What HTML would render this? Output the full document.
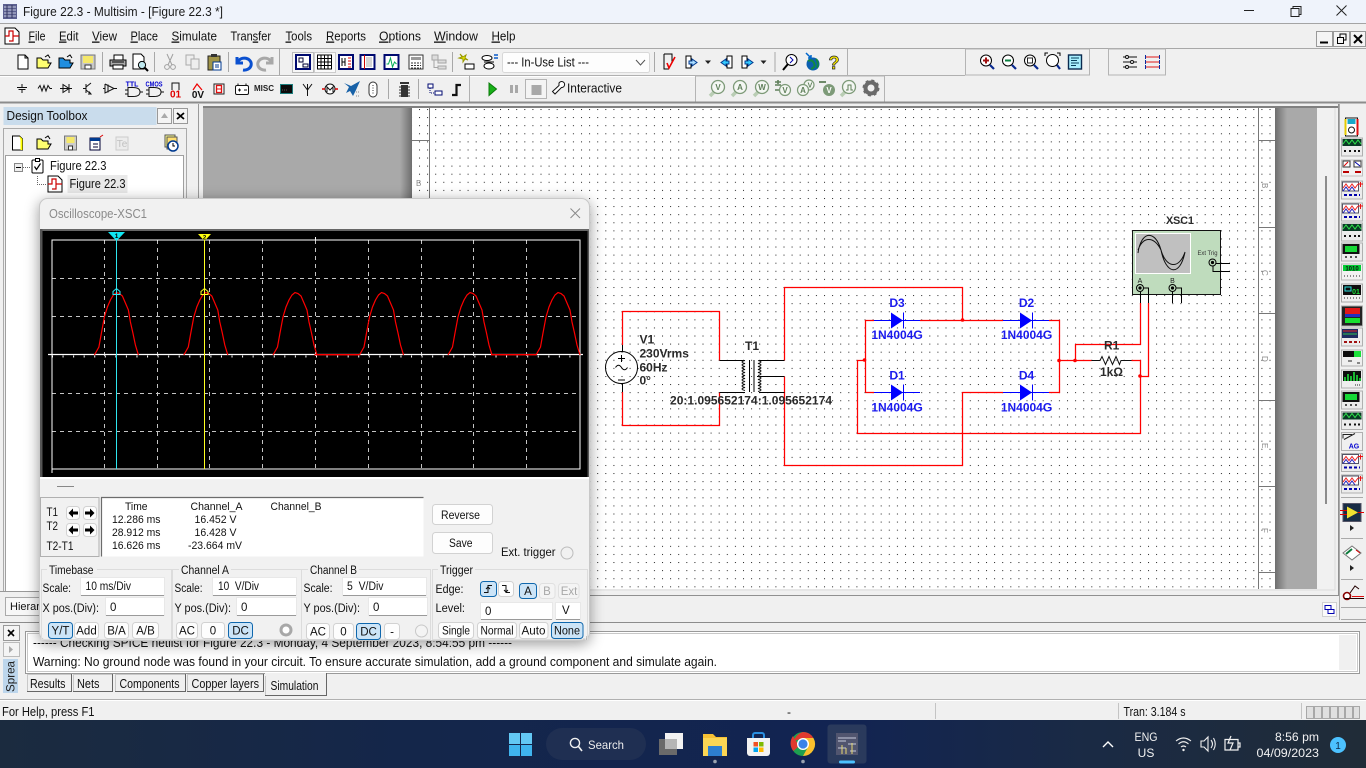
<!DOCTYPE html>
<html><head><meta charset="utf-8"><title>Figure 22.3 - Multisim</title>
<style>
html,body{margin:0;padding:0;width:1366px;height:768px;overflow:hidden;background:#f0f0f0}
svg{display:block;font-family:"Liberation Sans",sans-serif;font-size:12px}
text{fill:#111;white-space:pre}
.m{text-anchor:middle}
.b{fill:#fdfdfd;stroke:#d2d2d2}
.s{fill:#cce4f7;stroke:#0f67ad}
.i{fill:#fff;stroke:#e8e8e8}
.d{fill:#f4f4f4;stroke:#e0e0e0}
.g{fill:#9a9a9a}
.sb{font-weight:bold;fill:#2a2a2a}
.bl{font-weight:bold;fill:#1a1aee}
.l{fill:none;stroke:#000;stroke-width:1}
.r{fill:none;stroke:#f00;stroke-width:1.25}
.k{fill:none;stroke:#111;stroke-width:1}
.sep{stroke:#a8a8a8;stroke-width:1}
.lt{fill:#fff}
</style></head><body>
<svg width="1366" height="768" viewBox="0 0 1366 768" xmlns="http://www.w3.org/2000/svg">
<defs>
<pattern id="dots" x="419" y="109" width="8.1" height="8.09" patternUnits="userSpaceOnUse"><rect width="1" height="1" fill="#222"/></pattern>
<linearGradient id="tb" x1="0" x2="1" y1="0" y2="0"><stop offset="0" stop-color="#1b2b3f"/><stop offset=".3" stop-color="#14264a"/><stop offset=".62" stop-color="#122452"/><stop offset=".8" stop-color="#1a2a44"/><stop offset="1" stop-color="#202c38"/></linearGradient>
<linearGradient id="sh1" x1="0" x2="1" y1="0" y2="0"><stop offset="0" stop-color="#a9a9a9"/><stop offset="1" stop-color="#6e6e6e"/></linearGradient>
<linearGradient id="sh2" x1="0" x2="1" y1="0" y2="0"><stop offset="0" stop-color="#6e6e6e"/><stop offset="1" stop-color="#a9a9a9"/></linearGradient>
<polyline id="hump" fill="none" stroke="#f00" stroke-width="1.2" points="0,0 4.5,-8 7,-22 10,-38 13,-48 16,-55 19,-60 22,-62.5 25,-61.5 28,-59 31,-52 34,-45 36,-33 38.5,-22 41,-10 44,0"/>
<g id="diode"><path d="M-23,0H23" stroke="#00f" fill="none"/><path d="M-6,-8L6,0L-6,8Z" fill="#00f"/><path d="M6.5,-8V8" stroke="#00f" fill="none"/></g>
<g id="term"><circle r="3.5" fill="none" stroke="#000"/><circle r="1.6" fill="#000"/></g>
<g id="folder"><path d="M-7,6V-4H-3L-1,-2H4V1H7L4,6Z" stroke="#000" stroke-width="1"/><path d="M1,-5L4,-7L6,-4" fill="none" stroke="#000"/></g>
<g id="meas"><path d="M-8,8L-3,3" stroke="#b9cdb4" stroke-width="3.5" fill="none"/><circle cy="-1" r="6.5" fill="#f4f7f3" stroke="#7d9a78" stroke-width="1.3"/></g>
<g id="ig"><rect x="-10.5" y="-9" width="21" height="18" fill="#ececec" stroke="#b0b0b0"/><rect x="-9.5" y="-8" width="19" height="7" fill="#0a3a25"/><path d="M-9,-3L-6,-7L-3,-3L0,-7L3,-3L6,-7L9,-3" fill="none" stroke="#2ee04a"/><path d="M-8,4H-6M-3,4H-1M2,4H4M6,4H8" stroke="#111" stroke-width="2"/></g>
<g id="ib"><rect x="-10.5" y="-9" width="21" height="18" fill="#ececec" stroke="#b0b0b0"/><rect x="-9.5" y="-8" width="16" height="9" fill="#fff" stroke="#556"/><path d="M-9,-2L-6,-6L-3,-2L0,-6L3,-2L6,-6" fill="none" stroke="#e22"/><path d="M-9,1L-6,-3L-3,1L0,-3L3,1" fill="none" stroke="#22b"/><path d="M8.5,-8V-3M6,-6H11" stroke="#e11"/><path d="M-8,5H8" stroke="#00a" stroke-width="2" stroke-dasharray="3 2"/></g>
<g id="ik"><rect x="-10.5" y="-9" width="21" height="18" fill="#ececec" stroke="#b0b0b0"/><rect x="-9.5" y="-8" width="17" height="10" fill="#111"/><rect x="-7" y="-6" width="12" height="6" fill="#16d936"/><path d="M-7,5H-5M-2,5H0M3,5H5" stroke="#222" stroke-width="1.5"/></g>
</defs>

<!-- base -->
<rect width="1366" height="768" fill="#f0f0f0"/>
<!-- title bar -->
<rect width="1366" height="23" fill="#eff3fb"/>
<rect y="23" width="1366" height="1" fill="#a4a4a4"/>
<g transform="translate(3,4)"><rect width="14" height="15" fill="#5b5f8f"/><path d="M1,3H13M1,6H13M1,9H13M1,12H13" stroke="#c9cce0"/><path d="M4,1V14M9,1V14" stroke="#33355e"/></g>
<text x="23" y="16" font-size="13" textLength="200" lengthAdjust="spacingAndGlyphs" style="fill:#1a1a1a">Figure 22.3 - Multisim - [Figure 22.3 *]</text>
<path d="M1244,10.5H1254" stroke="#222"/>
<path d="M1291,8.5h8v8h-8zM1293,8.5v-2h8v8h-2" fill="none" stroke="#222"/>
<path d="M1336.5,5.5L1346.5,15.5M1346.5,5.5L1336.5,15.5" stroke="#222"/>

<!-- menu -->
<g transform="translate(12,36)"><path d="M-7,-8H3L7,-4V8H-7Z" fill="#fff" stroke="#000"/><path d="M-7,0H-3V-5H1V5H-3M1,0H7" fill="none" stroke="#c00" stroke-width="1.2"/></g>
<g font-size="13">
<text x="28.5" y="40.5" textLength="17" lengthAdjust="spacingAndGlyphs"><tspan text-decoration="underline">F</tspan>ile</text>
<text x="59" y="40.5" textLength="19.5" lengthAdjust="spacingAndGlyphs"><tspan text-decoration="underline">E</tspan>dit</text>
<text x="92" y="40.5" textLength="25" lengthAdjust="spacingAndGlyphs"><tspan text-decoration="underline">V</tspan>iew</text>
<text x="130.5" y="40.5" textLength="27.5" lengthAdjust="spacingAndGlyphs"><tspan text-decoration="underline">P</tspan>lace</text>
<text x="171.5" y="40.5" textLength="45.5" lengthAdjust="spacingAndGlyphs"><tspan text-decoration="underline">S</tspan>imulate</text>
<text x="230.5" y="40.5" textLength="40.5" lengthAdjust="spacingAndGlyphs">Tran<tspan text-decoration="underline">s</tspan>fer</text>
<text x="285.5" y="40.5" textLength="26.5" lengthAdjust="spacingAndGlyphs"><tspan text-decoration="underline">T</tspan>ools</text>
<text x="326" y="40.5" textLength="40" lengthAdjust="spacingAndGlyphs"><tspan text-decoration="underline">R</tspan>eports</text>
<text x="379" y="40.5" textLength="42" lengthAdjust="spacingAndGlyphs"><tspan text-decoration="underline">O</tspan>ptions</text>
<text x="434" y="40.5" textLength="44" lengthAdjust="spacingAndGlyphs"><tspan text-decoration="underline">W</tspan>indow</text>
<text x="491.5" y="40.5" textLength="24" lengthAdjust="spacingAndGlyphs"><tspan text-decoration="underline">H</tspan>elp</text>
</g>
<g><rect x="1316.5" y="31.5" width="16" height="15" fill="#f4f4f4" stroke="#999"/><path d="M1320,42.5H1328" stroke="#000" stroke-width="2"/>
<rect x="1333.5" y="31.5" width="16" height="15" fill="#f4f4f4" stroke="#999"/><path d="M1337.5,37.5h6v6h-6zM1340,37v-3h6v6h-2.5" fill="none" stroke="#000"/>
<rect x="1350.5" y="31.5" width="15" height="15" fill="#f4f4f4" stroke="#999"/><path d="M1354,35L1362,43M1362,35L1354,43" stroke="#000" stroke-width="2"/></g>

<!-- toolbar separators -->
<path d="M0,48.5H1366" stroke="#a8a8a8"/>
<path d="M0,75.5H965" stroke="#b0b0b0"/>
<path d="M0,76.5H884" stroke="#fff"/>
<path d="M847.5,49V75" stroke="#b0b0b0"/>
<rect x="965.5" y="49" width="124" height="26" fill="#f0f0f0" stroke="#b4b4b4"/>
<rect x="1108.5" y="49" width="57" height="26" fill="#f0f0f0" stroke="#b4b4b4"/>
<rect x="695.5" y="76" width="189" height="26" fill="#f0f0f0" stroke="#b4b4b4"/>
<path d="M469.5,76V102" stroke="#b0b0b0"/>
<path d="M0,102.5H1366" stroke="#8c8c8c" stroke-width="2"/>

<!-- row 1 icons -->
<g transform="translate(23,62)"><path d="M-5,-7H2L5,-4V7H-5Z" fill="#fff" stroke="#000"/><path d="M2,-7V-4H5" fill="none" stroke="#000"/></g>
<use href="#folder" x="44" y="62" fill="#ffff70"/>
<use href="#folder" x="66" y="62" fill="#1f8ee0"/>
<g transform="translate(88,62)"><rect x="-7" y="-7" width="14" height="14" fill="#c8c8c8" stroke="#777"/><rect x="-5" y="-6" width="10" height="7" fill="#f5e86a"/><rect x="-3" y="3" width="6" height="4" fill="#fff" stroke="#333"/></g>
<path class="sep" d="M102.5,52V72M154.5,52V72M228.5,52V72M279.5,49V75"/>
<g transform="translate(118,62)"><rect x="-4" y="-7" width="9" height="5" fill="#fff" stroke="#000"/><path d="M-8,-2H8V4H-8Z" fill="#aaa" stroke="#000"/><rect x="-5" y="3" width="10" height="4" fill="#fff" stroke="#000"/><path d="M-6,0H6" stroke="#000"/></g>
<g transform="translate(139,62)"><path d="M-6,-8H2L5,-5V7H-6Z" fill="#fff" stroke="#000"/><circle cx="3" cy="3" r="3.6" fill="#bfe8ee" stroke="#000"/><path d="M5.5,5.5L9,9" stroke="#000" stroke-width="2"/></g>
<g transform="translate(170,62)" fill="none" stroke="#a0a0a0"><circle cx="-3" cy="5" r="2.4"/><circle cx="3" cy="5" r="2.4"/><path d="M-2,3L3,-8M2,3L-3,-8"/></g>
<g transform="translate(193,62)" fill="#eee" stroke="#aaa"><rect x="-7" y="-7" width="8" height="10"/><rect x="-2" y="-3" width="8" height="10"/></g>
<g transform="translate(214,62)"><rect x="-6" y="-6" width="12" height="14" fill="#a09448" stroke="#222"/><rect x="-3" y="-8" width="6" height="3" fill="#333"/><rect x="-1" y="0" width="8" height="8" fill="#fff" stroke="#003a90"/><path d="M1,3H5M1,5H5" stroke="#003a90"/></g>
<path d="M237,57V63H243M237.5,62.5A7,6 0 1 1 243,70" fill="none" stroke="#0a50d0" stroke-width="3"/>
<path d="M272,57V63H266M271.5,62.5A7,6 0 1 0 266,70" fill="none" stroke="#a8a8a8" stroke-width="3"/>
<!-- view group -->
<rect x="292.5" y="52.5" width="21" height="20" fill="#f7f7f7" stroke="#bbb"/>
<rect x="314.5" y="52.5" width="21" height="20" fill="#fafafa" stroke="#ccc"/>
<g transform="translate(303,62)"><rect x="-7" y="-7" width="14" height="14" fill="#fff" stroke="#000a70" stroke-width="2"/><path d="M-4,-4H0V0H-4ZM0,2H5V5H0Z" fill="#fff" stroke="#003"/></g>
<g transform="translate(324.5,62)" fill="none" stroke="#000"><rect x="-7" y="-7" width="14" height="14" fill="#fff"/><path d="M-7,-3.5H7M-7,0H7M-7,3.5H7M-3.5,-7V7M0,-7V7M3.5,-7V7"/></g>
<g transform="translate(346,62)"><rect x="-7" y="-7" width="14" height="14" fill="#fff" stroke="#000a70" stroke-width="2"/><path d="M-4,-4V4M-1,-4V4M-4,0H-1" stroke="#000" fill="none"/><path d="M2,-4H5M2,-1H5M2,2H5M2,5H5" stroke="#d00"/></g>
<g transform="translate(367.5,62)"><rect x="-7" y="-7" width="14" height="14" fill="#fff" stroke="#000a70" stroke-width="2"/><path d="M-3,-7V7" stroke="#c00"/><path d="M-1,-4H5M-1,-2H5M-1,0H5M-1,2H5M-1,4H5" stroke="#555" stroke-dasharray="1 1"/></g>
<g transform="translate(391.5,62)"><rect x="-7" y="-7" width="14" height="14" fill="#fff" stroke="#000a70" stroke-width="2"/><path d="M-5,2L-3,2L-1,-4L1,5L3,0L5,2" fill="none" stroke="#0a5"/></g>
<g transform="translate(416,62)"><rect x="-7" y="-7" width="14" height="14" fill="#fff" stroke="#333"/><path d="M-5,-5H5V-2H-5Z" fill="#999"/><path d="M-5,1H5M-5,3.5H5M-5,6H5" stroke="#333" stroke-dasharray="2 1"/></g>
<g transform="translate(439,62)" fill="#ddd" stroke="#a5a5a5"><rect x="-7" y="-7" width="6" height="5"/><rect x="-1" y="-2" width="8" height="3"/><rect x="-1" y="4" width="8" height="3"/><path d="M-5,-2V5.5H-1" fill="none"/></g>
<path class="sep" d="M452.5,52V72M654.5,52V72M775,52V72"/>
<g transform="translate(466,62)"><path d="M-6,-8L-4,-5L-7,-4L-3,-3L-3,0L-1,-3L2,-2L-1,-4L0,-7L-3,-5Z" fill="#ee0" stroke="#990"/><rect x="-1" y="2" width="9" height="5" fill="#fff" stroke="#000"/></g>
<g transform="translate(490,62)"><ellipse cx="-3" cy="-4" rx="5" ry="2.5" fill="#fff" stroke="#000"/><ellipse cx="-1" cy="4" rx="5" ry="3" fill="#fff" stroke="#000"/><path d="M-6,0H4" stroke="#000"/><path d="M4,-7H8M4,-4H8" stroke="#0a5ac8" stroke-width="1.5"/></g>
<rect x="502.5" y="52.5" width="147" height="20" rx="2" fill="#fdfdfd" stroke="#d8d8d8"/>
<text x="507" y="66.5" font-size="12.5" textLength="82" lengthAdjust="spacingAndGlyphs">--- In-Use List ---</text>
<path d="M636,60L640.5,65L645,60" fill="none" stroke="#555"/>
<g transform="translate(669,62)"><path d="M-5,-8H3V0M-5,-8V7H0" fill="none" stroke="#000"/><path d="M-2,1L0,6L6,-5" fill="none" stroke="#e00" stroke-width="1.6"/></g>
<g transform="translate(692,62)"><path d="M-6,-6H-1V6H-6Z" fill="#fff" stroke="#000"/><path d="M0,-3V-1H-3V2H0V4L5,0.5Z" fill="#aaddff" stroke="#003a90"/></g>
<path d="M705,60.5H711L708,64Z" fill="#222"/>
<g transform="translate(726,62)"><path d="M6,-6H1V6H6Z" fill="#fff" stroke="#000"/><path d="M0,-3V-1H3V2H0V4L-5,0.5Z" fill="#33ccff" stroke="#003a90"/></g>
<g transform="translate(748,62)"><path d="M-6,-6H-1V6H-6Z" fill="#fff" stroke="#000"/><path d="M0,-3V-1H-3V2H0V4L5,0.5Z" fill="#33ccff" stroke="#003a90"/></g>
<path d="M760.5,60.5H766.5L763.5,64Z" fill="#222"/>
<g transform="translate(790,62)"><circle cx="1.5" cy="-2" r="5.5" fill="#fff" stroke="#000"/><path d="M-2,2L-7,8" stroke="#000" stroke-width="2"/><path d="M0,-5L3,-2L0,1" fill="none" stroke="#00a"/></g>
<g transform="translate(813,62)"><circle cy="2" r="6.5" fill="#0b5fb0"/><path d="M-5,-1Q-1,-3 1,1T-2,7M3,-3Q6,1 4,6" fill="none" stroke="#184" stroke-width="2"/><path d="M-7,-9L-2,-4M-5,-4H-2V-7" fill="none" stroke="#06c" stroke-width="1.5"/></g>
<text x="834" y="69" class="m" font-size="18" font-weight="bold" style="fill:#f4e400;stroke:#222;stroke-width:.7">?</text>

<!-- zoom group -->
<g fill="#fff" stroke="#000">
<circle cx="986" cy="60.5" r="5.5"/><circle cx="1008" cy="60.5" r="5.5"/><circle cx="1030" cy="60.5" r="5.5"/>
</g>
<path d="M990,65L994,69M1012,65L1016,69M1034,65L1038,69M1057,65L1060,69" stroke="#0a2a90" stroke-width="2.2"/>
<path d="M983,60.5H989M986,57.5V63.5" stroke="#a01010" stroke-width="2"/>
<path d="M1005,60.5H1011" stroke="#0a8040" stroke-width="2"/>
<rect x="1027.5" y="58" width="5" height="5" fill="none" stroke="#222"/>
<circle cx="1052.5" cy="60.5" r="6" fill="#fff" stroke="#000"/>
<path d="M1045,56V53H1048M1057,53H1060V56" fill="none" stroke="#000"/>
<rect x="1068.5" y="55" width="13" height="14" fill="#a8f0ff" stroke="#0a2a4f" stroke-width="1.4"/><path d="M1071,58H1079M1071,60.5H1077M1071,63H1079M1071,65.5H1076" stroke="#06405c"/>
<g stroke="#111" fill="none"><path d="M1123,57H1137M1123,62H1137M1123,67H1137"/><circle cx="1127" cy="57" r="1.5" fill="#fff"/><circle cx="1132" cy="62" r="1.5" fill="#fff"/><circle cx="1127" cy="67" r="1.5" fill="#fff"/></g>
<path d="M1146,57H1159M1146,62H1159M1146,67H1159" stroke="#e01818"/><path d="M1145.5,55V59M1159.5,55V59M1145.5,60V64M1159.5,60V64M1145.5,65V69M1159.5,65V69" stroke="#0a2aa0"/>

<!-- row 2 icons -->
<g fill="none" stroke="#111">
<path d="M22,84V87.5M17,87.5H27M18.5,89.5H25.5M22,89.5V93"/>
<path d="M38,88.5L40,85.5L42,91L44,85.5L46,91L48,85.5L50,88.5H52"/>
<path d="M60,88.5H72M63,84.5L69,88.5L63,92.5ZM69,84V93"/>
<path d="M83,88.5H86M86,84V93M86,87L91,83M86,90L91,94M89,91.5L91,94L88,94"/>
<path d="M103,88.5H105M105,84V93L114,88.5L105,84M114,88.5H117M108,84.5V92.5"/>
<path d="M125,90H128M125,94H128M128,87.5H133Q140,87.5 140,92Q140,96.5 133,96.5H128ZM140,92H143"/>
<path d="M146,90H149M146,94H149M149,87.5H154Q161,87.5 161,92Q161,96.5 154,96.5H149ZM161,92H164"/>
</g>
<text x="132" y="86.5" class="m" font-size="7" font-weight="bold" style="fill:#0000d0">TTL</text>
<text x="154" y="86.5" class="m" font-size="7" font-weight="bold" style="fill:#0000d0" textLength="17" lengthAdjust="spacingAndGlyphs">CMOS</text>
<path d="M172,90V83H179V90" fill="none" stroke="#111"/>
<text x="175.5" y="97.5" class="m" font-size="10" font-weight="bold" style="fill:#e00000">01</text>
<path d="M193,90L197,84L202,90" fill="none" stroke="#e00" stroke-width="1.2"/><text x="198" y="98" class="m" font-size="10" font-weight="bold" style="fill:#111">0V</text>
<rect x="214" y="84" width="10" height="10" fill="#fff" stroke="#222"/><rect x="216.5" y="85.5" width="5" height="7" fill="none" stroke="#e01010" stroke-width="1.3"/><path d="M216.5,89H221.5" stroke="#e01010"/>
<rect x="235.5" y="85.5" width="13" height="9" rx="1.5" fill="#fff" stroke="#111"/><path d="M238,90H241M239.5,88.5V91.5M244,90H247M238,85V83.5M246,85V83.5" stroke="#111"/>
<text x="264" y="91" class="m" font-size="8" font-weight="bold" style="fill:#222">MISC</text>
<rect x="280.5" y="84.5" width="12" height="9" fill="#0b0b0b" stroke="#1b7d7d"/><path d="M282,90H288" stroke="#555" stroke-dasharray="1 1"/>
<path d="M307.5,84V96M303,84L307.5,90L312,84" fill="none" stroke="#111"/>
<g transform="translate(330,89)"><circle r="5" fill="#fff" stroke="#111"/><path d="M-3,3V-2L0,1L3,-2V3" fill="none" stroke="#111"/><path d="M-8,0H-5M5,0H8" stroke="#d00" stroke-width="1.5"/></g>
<path d="M344,83L351,86L360,81L356,90L353,96L350,91L346,93L349,87Z" fill="#1862a8"/><path d="M356,92H360M356,96H360" stroke="#888" stroke-dasharray="1 1"/>
<rect x="369" y="82" width="8" height="15" rx="4" fill="#fff" stroke="#333"/><path d="M373,85V94" stroke="#333" stroke-dasharray="1 1.5"/>
<path class="sep" d="M388.5,79V99M418.5,79V99"/>
<rect x="401" y="85" width="7" height="12" fill="#333"/><path d="M399,87H410M399,90H410M399,93H410M399,96H410" stroke="#333"/><rect x="400" y="82" width="9" height="2" fill="#333"/>
<g transform="translate(434,89)" fill="#fff" stroke="#000a70"><rect x="-6" y="-5" width="5" height="4"/><rect x="1" y="2" width="7" height="4"/><path d="M-4,-1V4H1" fill="none" stroke-dasharray="1 1"/></g>
<path d="M452,95H456.5V85H461" fill="none" stroke="#111" stroke-width="2.2"/>
<path d="M489,83V95.5L496.5,89Z" fill="#18b018" stroke="#0a7a0a"/>
<path d="M511.5,85V93M516.5,85V93" stroke="#a8a8a8" stroke-width="3"/>
<rect x="525.5" y="79.5" width="21" height="19" fill="#f4f4f4" stroke="#b4b4b4"/><rect x="531.5" y="85" width="10" height="10" fill="#a8a8a8"/>
<path d="M559,83a3,3 0 1 1 2.5,4.5L555,94L552.5,91.5L559,85.5Z" fill="#fff" stroke="#111"/>
<text x="567" y="92.5" font-size="12.5" textLength="55" lengthAdjust="spacingAndGlyphs">Interactive</text>
<!-- measurement icons -->
<g font-size="8" font-weight="bold" style="text-anchor:middle">
<use href="#meas" x="718" y="88"/><text x="718" y="90" style="fill:#5f7f5a">V</text>
<use href="#meas" x="740" y="88"/><text x="740" y="90" style="fill:#5f7f5a">A</text>
<use href="#meas" x="762" y="88"/><text x="762" y="90" style="fill:#5f7f5a">W</text>
<path d="M775,82H781M775,85H781M778,80V84M775,90H781" stroke="#5f7f5a" stroke-width="1.6"/><circle cx="785" cy="90" r="5.5" fill="#f4f7f3" stroke="#7d9a78" stroke-width="1.2"/><text x="785" y="93" style="fill:#5f7f5a">V</text>
<circle cx="809" cy="85" r="5" fill="#f4f7f3" stroke="#7d9a78" stroke-width="1.2"/><circle cx="803" cy="90" r="5.5" fill="#f4f7f3" stroke="#7d9a78" stroke-width="1.2"/><text x="803" y="93" style="fill:#5f7f5a">A</text><text x="810" y="87.5" style="fill:#5f7f5a" font-size="7">V</text>
<path d="M819,82H826" stroke="#5f7f5a" stroke-width="1.8"/><circle cx="829" cy="90" r="6" fill="#7d9a78"/><text x="829" y="93" style="fill:#fff">V</text>
<use href="#meas" x="849" y="88"/><path d="M846,90H848V85H851V90H853" fill="none" stroke="#5f7f5a"/>
</g>
<g transform="translate(871,88)"><circle r="5.5" fill="none" stroke="#6a6a6a" stroke-width="4"/><circle r="7.5" fill="none" stroke="#6a6a6a" stroke-width="2" stroke-dasharray="3 2.9"/></g>

<!-- left panel -->
<rect x="3.5" y="107" width="153" height="18" fill="#c9dcec"/>
<text x="6.5" y="120" font-size="12.5" textLength="81" lengthAdjust="spacingAndGlyphs">Design Toolbox</text>
<rect x="157.5" y="108.5" width="14" height="15" fill="#f4f4f4" stroke="#999"/><path d="M161,118H168L164.5,113Z" fill="#aaa"/>
<rect x="173.5" y="108.5" width="14" height="15" fill="#f4f4f4" stroke="#999"/><path d="M177,113L184,119M184,113L177,119" stroke="#000" stroke-width="1.8"/>
<rect x="3.5" y="128.5" width="183" height="470" fill="#f0f0f0" stroke="#aaa"/>
<g transform="translate(17.5,143)"><path d="M-5,-7H2L5,-4V7H-5Z" fill="#fff" stroke="#000"/><path d="M2,-7L5,-4V7H3V-3Z" fill="#ff0"/></g>
<use href="#folder" x="44" y="143" fill="#ffff70"/>
<g transform="translate(70.5,143)"><rect x="-6" y="-7" width="12" height="14" fill="#ccc" stroke="#777"/><rect x="-4" y="-6" width="8" height="6" fill="#f5e86a"/><rect x="-2" y="3" width="4" height="4" fill="#fff" stroke="#333"/></g>
<g transform="translate(96,143)"><rect x="-6" y="-5" width="10" height="12" fill="#fff" stroke="#003"/><rect x="-6" y="-5" width="10" height="3" fill="#003a90"/><path d="M-3,1H2M-3,4H2" stroke="#003"/><path d="M4,-6L7,-8" stroke="#d00"/></g>
<g transform="translate(122,143)"><rect x="-6" y="-6" width="12" height="13" fill="#ececec" stroke="#ccc"/><text x="0" y="4" class="m" font-size="10" style="fill:#c0c0c0">Te</text></g>
<g transform="translate(172,143)"><rect x="-7" y="-8" width="10" height="12" fill="#ffff90" stroke="#555"/><rect x="-5" y="-6" width="10" height="12" fill="#ffe070" stroke="#555"/><circle cx="1" cy="3" r="5" fill="#fff" stroke="#003a90" stroke-width="1.5"/><path d="M1,0V3H3" stroke="#000" fill="none"/></g>
<rect x="5.5" y="155.5" width="178" height="443" fill="#fff" stroke="#a0a0a0"/>
<rect x="14.5" y="163.5" width="8" height="8" fill="#eee" stroke="#888"/><path d="M16,167.5H21" stroke="#000"/>
<path d="M23,167.5H31M37.5,176V184.5H47" fill="none" stroke="#666" stroke-dasharray="1 1"/>
<g transform="translate(37.5,166.5)"><rect x="-5.5" y="-6.5" width="11" height="13" rx="1" fill="#fff" stroke="#000"/><rect x="-2" y="-8" width="4" height="3" fill="#fff" stroke="#000"/><path d="M-3,0L-1,3L3,-3" fill="none" stroke="#000" stroke-width="1.2"/></g>
<text x="50" y="170" font-size="12.5" textLength="56.5" lengthAdjust="spacingAndGlyphs">Figure 22.3</text>
<rect x="67.5" y="175" width="60" height="18" fill="#e9e9e9"/>
<g transform="translate(55,184)"><path d="M-7,-8H3L7,-4V8H-7Z" fill="#fff" stroke="#000"/><path d="M-7,0H-3V-5H1V5H-3M1,0H7" fill="none" stroke="#c00" stroke-width="1.2"/></g>
<text x="69.5" y="188" font-size="12.5" textLength="56" lengthAdjust="spacingAndGlyphs">Figure 22.3</text>

<!-- canvas -->
<path d="M198.5,104V596" stroke="#9a9a9a"/>
<rect x="203" y="106" width="1135" height="2" fill="#808080"/>
<rect x="203" y="108" width="197" height="481" fill="#a9a9a9"/>
<rect x="400" y="108" width="12" height="481" fill="url(#sh1)"/>
<rect x="412" y="108" width="863" height="481" fill="#fff"/>
<rect x="412" y="108" width="863" height="481" fill="url(#dots)" shape-rendering="crispEdges"/>
<g stroke="#777" shape-rendering="crispEdges">
<path d="M429.5,108V589M1258.5,108V589"/>
<path d="M412,140.5H429M1258,140.5H1275M412,227.5H429M1258,227.5H1275M412,313.5H429M1258,313.5H1275M1258,400.5H1275M1258,486.5H1275M1258,572.5H1275"/>
</g>
<rect x="1275" y="108" width="12" height="481" fill="url(#sh2)"/>
<rect x="1287" y="108" width="30" height="481" fill="#a9a9a9"/>
<rect x="1317" y="108" width="18" height="481" fill="#f1f1f1"/>
<rect x="1325" y="176" width="2" height="328" fill="#8c8c8c"/>
<path d="M1338.5,104V596M203,595.5H1338" stroke="#909090"/>
<path d="M1335,108V590H203" fill="none" stroke="#dcdcdc"/>
<g font-size="8" style="fill:#888"><text x="416" y="186" style="fill:#888">B</text>
<text x="1265" y="186" style="fill:#888" transform="rotate(90 1265 183)">B</text>
<text x="1265" y="273" style="fill:#888" transform="rotate(90 1265 270)">C</text>
<text x="1265" y="359" style="fill:#888" transform="rotate(90 1265 356)">D</text>
<text x="1265" y="446" style="fill:#888" transform="rotate(90 1265 443)">E</text>
<text x="1265" y="531" style="fill:#888" transform="rotate(90 1265 528)">F</text></g>

<!-- circuit -->
<g>
<path class="r" d="M622.5,345V311.5H719.5V360.5M719.5,392.5V425.5H622.5V392"/>
<path class="r" d="M784.5,360.5V287.5H962.5V320.5M784.5,376.5V465.5H962.5V392.5H1003M865.5,392.5V320.5H874M920,320.5H1003M1049,320.5H1059.5V392.5H1049M865.5,392.5H874"/>
<path class="r" d="M865.5,360.5H857.5V433.5H1140.5V360.5H1131.5M1059.5,360.5H1091.5M1075.5,360.5V344.5H1140.5V303M1148.5,303V376.5H1140.5"/>
<path class="l" d="M622.5,345V352M622.5,383V392M719.5,360.5H745M719.5,392.5H745M759,360.5H784.5M757,376.5H784.5M759,392.5H784.5M749.5,360V392M754,360V392"/>
</g>
<circle cx="621.5" cy="367.5" r="16" fill="none" stroke="#000"/>
<path d="M618,358.5H625M621.5,355V362M618,380H625M615.5,367.5Q618.5,363 621.5,367.5T627.5,367.5" fill="none" stroke="#000"/>
<path class="k" d="M745,360.5q-6,1.5 0,3q-6,1.5 0,3q-6,1.5 0,3q-6,1.5 0,3q-6,1.5 0,3q-6,1.5 0,3q-6,1.5 0,3q-6,1.5 0,3q-6,1.5 0,3q-6,1.5 0,3M758,360.5q6,1.5 0,3q6,1.5 0,3q6,1.5 0,3q6,1.5 0,3q6,1.5 0,3M758,376.5q6,1.5 0,3q6,1.5 0,3q6,1.5 0,3q6,1.5 0,3q6,1.5 0,3"/>
<use href="#diode" x="897" y="320.5"/><use href="#diode" x="1026" y="320.5"/><use href="#diode" x="897" y="392.5"/><use href="#diode" x="1026" y="392.5"/>
<path class="k" d="M1091.5,360.5H1100l2,-4 3.5,8 3.5,-8 3.5,8 3.5,-8 3.5,8 1.5,-4H1131.5"/>
<g fill="#f00"><circle cx="962.5" cy="320" r="1.8"/><circle cx="864.5" cy="360" r="1.8"/><circle cx="1059" cy="360.5" r="1.8"/><circle cx="1075" cy="360.5" r="1.8"/><circle cx="1140" cy="376" r="1.8"/></g>
<g class="sb">
<text x="639.5" y="343.5" class="sb" style="font-weight:bold">V1</text>
<text x="639.5" y="357.5" class="sb">230Vrms</text>
<text x="639.5" y="371.5" class="sb">60Hz</text>
<text x="639.5" y="384.5" class="sb">0°</text>
<text x="745" y="350" class="sb">T1</text>
<text x="670" y="404.5" class="sb" textLength="162">20:1.095652174:1.095652174</text>
</g>
<text x="897" y="307" class="m bl">D3</text><text x="897" y="339" class="m bl">1N4004G</text>
<text x="897" y="379.5" class="m bl">D1</text><text x="897" y="411.5" class="m bl">1N4004G</text>
<text x="1026.5" y="307" class="m bl">D2</text><text x="1026.5" y="339" class="m bl">1N4004G</text>
<text x="1026.5" y="379.5" class="m bl">D4</text><text x="1026.5" y="411.5" class="m bl">1N4004G</text>
<text x="1104" y="349.5" class="sb">R1</text><text x="1100" y="376" class="sb">1kΩ</text>
<!-- XSC1 -->
<text x="1166" y="224" font-size="11" class="sb" textLength="28" lengthAdjust="spacingAndGlyphs">XSC1</text>
<rect x="1132.5" y="230.5" width="88" height="64" fill="#bfdcbd" stroke="#111"/>
<rect x="1135.5" y="233.5" width="55" height="40" fill="#c0c0c0" stroke="#fff"/>
<path d="M1138,253C1141,231 1155,229 1161,250C1166,275 1180,277 1185,252M1138,250C1143,236 1154,236 1161,250C1166,268 1179,270 1185,252" fill="none" stroke="#111"/>
<text x="1197.5" y="255" font-size="6.5" style="fill:#333" textLength="20" lengthAdjust="spacingAndGlyphs">Ext Trig</text>
<use href="#term" x="1212.5" y="262.5"/><use href="#term" x="1140" y="288"/><use href="#term" x="1172.5" y="288"/>
<path class="l" d="M1216,263.5H1230M1213,266V271.5H1230M1143.5,288H1148.5V303M1140.5,292V303M1176,288H1181.5V303M1172.5,292V303"/>
<text x="1140" y="283" class="m" font-size="7" style="fill:#222">A</text><text x="1172.5" y="283" class="m" font-size="7" style="fill:#222">B</text>

<!-- instruments -->
<path d="M1339.5,104V620" stroke="#aaa"/>
<g transform="translate(1351.5,127)"><rect x="-6" y="-9" width="12" height="18" fill="#fff" stroke="#111"/><rect x="-4" y="-8" width="8" height="5" fill="#18a8c8"/><circle cy="3" r="3" fill="none" stroke="#111"/><path d="M-6,-8V8" stroke="#e5c900" stroke-width="2"/><path d="M6,-8V8" stroke="#e01010" stroke-width="2"/></g>
<use href="#ig" x="1352" y="147"/>
<g transform="translate(1352,168)"><rect x="-10.5" y="-8" width="21" height="16" fill="#f2f2f2" stroke="#c0c0c0"/><rect x="-9" y="-7" width="7" height="6" fill="#fff" stroke="#333"/><rect x="2" y="-7" width="7" height="6" fill="#fff" stroke="#333"/><path d="M-8,-2L-4,-6" stroke="#d00"/><path d="M3,-6L8,-2" stroke="#00a"/><path d="M-9,4H-3M3,4H9" stroke="#b00" stroke-width="2"/></g>
<use href="#ib" x="1352" y="190"/><use href="#ib" x="1352" y="212"/>
<use href="#ig" x="1352" y="232"/><use href="#ik" x="1352" y="252"/>
<g transform="translate(1352,272)"><rect x="-10.5" y="-8" width="21" height="16" fill="#f2f2f2" stroke="#b8b8b8"/><rect x="-9" y="-7" width="18" height="6" fill="#0c3" /><text x="0" y="-1.5" class="m" font-size="6" font-weight="bold" style="fill:#111">1010</text><path d="M-8,4H8" stroke="#222" stroke-dasharray="1 2"/></g>
<g transform="translate(1352,293)"><rect x="-10.5" y="-9" width="21" height="18" fill="#efefef" stroke="#a8a8a8"/><rect x="-9" y="-8" width="18" height="10" fill="#0d0d0d"/><path d="M-7,-6H-1V-2H-7Z" fill="none" stroke="#2be0e0"/><text x="4" y="1" class="m" font-size="7" font-weight="bold" style="fill:#1be03a">01</text><path d="M-8,5H8" stroke="#222" stroke-dasharray="1 2"/></g>
<g transform="translate(1352,316)"><rect x="-10.5" y="-10" width="21" height="20" fill="#222" stroke="#aaa"/><rect x="-7" y="-8" width="15" height="6" fill="#e01818"/><rect x="-7" y="-2" width="15" height="3" fill="#2030c0"/><rect x="-7" y="2" width="15" height="5" fill="#18e030"/></g>
<g transform="translate(1352,337)"><rect x="-10.5" y="-9" width="21" height="18" fill="#ececec" stroke="#b0b0b0"/><rect x="-10" y="-8" width="16" height="9" fill="#1f2c60"/><path d="M-9,-6H5" stroke="#e02020"/><path d="M-9,-3H5" stroke="#30c050"/><path d="M-8,5H8" stroke="#a01010" stroke-width="2" stroke-dasharray="3 2"/></g>
<g transform="translate(1352,358)"><rect x="-10.5" y="-8" width="21" height="16" fill="#efefef" stroke="#b0b0b0"/><rect x="-9" y="-7" width="18" height="6" fill="#0d0d0d"/><rect x="2" y="-7" width="7" height="6" fill="#1be03a"/><path d="M-4,3H0M5,5H8" stroke="#222"/></g>
<g transform="translate(1352,379)"><rect x="-10.5" y="-9" width="21" height="18" fill="#efefef" stroke="#b0b0b0"/><rect x="-9" y="-8" width="18" height="10" fill="#0d0d0d"/><path d="M-7,2V-2M-4,2V-5M-1,2V-3M2,2V-7M5,2V-4M8,2V-1" stroke="#1be03a" stroke-width="1.6"/><path d="M3,6H9" stroke="#222" stroke-dasharray="1 1"/></g>
<use href="#ik" x="1352" y="400"/>
<use href="#ig" x="1352" y="420.5"/>
<g transform="translate(1352,441.5)"><rect x="-10.5" y="-9" width="21" height="18" fill="#f0f0f0" stroke="#b0b0b0"/><path d="M-9,-3V-7H0M-8,-2L3,-8" fill="none" stroke="#222"/><text x="2" y="7" class="m" font-size="7" font-weight="bold" style="fill:#0000d0">AG</text></g>
<g transform="translate(1352,462.5)"><use href="#ib"/></g>
<g transform="translate(1352,484)"><use href="#ib"/></g>
<path d="M1341,497.5H1363M1341,538.5H1363M1341,579.5H1363" stroke="#aaa"/>
<g transform="translate(1352,512.5)"><rect x="-9" y="-9" width="18" height="18" fill="#182c45" stroke="#556"/><path d="M-5,-6V6L6,0Z" fill="#f0e030"/><path d="M-12,-2H-5M-12,2H-5" stroke="#d00"/><path d="M6,0H12" stroke="#d00"/></g>
<path d="M1350,525V531L1354,528Z" fill="#222"/>
<g transform="translate(1352,553)"><path d="M-9,0L0,-7L9,0L0,7Z" fill="#fff" stroke="#777"/><path d="M-6,1L0,-4" stroke="#0a7a3a" stroke-width="2"/><path d="M4,-3L8,0" stroke="#d00"/></g>
<path d="M1350,565V571L1354,568Z" fill="#222"/>
<g transform="translate(1350,592)"><circle cx="-3" cy="4" r="3.5" fill="#fff" stroke="#800" stroke-width="1.6"/><path d="M0,1L5,-6L9,-3M-6,6.5H14" fill="none" stroke="#200"/><path d="M2,4.5H14" stroke="#e01010"/></g>
<path d="M1341,607.5H1366M1341,619.5H1366" stroke="#aaa"/>
<rect x="1322.5" y="602.5" width="14" height="14" fill="#fbfbfb" stroke="#d0d0d0"/><path d="M1325,605.5h6v4h-6zM1328,609.5v4h6v-4h-3" fill="#fff" stroke="#0000b0"/>

<!-- hierarchy tab -->
<path d="M0,591.5H40" stroke="#999"/>
<rect x="0" y="592" width="40" height="30" fill="#f0f0f0"/>
<rect x="5.5" y="597.5" width="40" height="18" fill="#f7f7f7" stroke="#aaa"/>
<text x="10" y="610" font-size="11">Hierar</text>

<!-- bottom panel -->
<path d="M0,622.5H1366" stroke="#8c8c8c"/>
<rect x="3.5" y="625.5" width="16" height="15" fill="#f4f4f4" stroke="#999"/><path d="M8,630L14,636M14,630L8,636" stroke="#000" stroke-width="1.6"/>
<rect x="3.5" y="642.5" width="16" height="14" fill="#f4f4f4" stroke="#bbb"/><path d="M9,646V653L13,649.5Z" fill="#aaa"/>
<rect x="3" y="659" width="15" height="34" fill="#bdd6ec"/>
<text transform="translate(14.5,692) rotate(-90)" font-size="12" textLength="31" lengthAdjust="spacingAndGlyphs" style="fill:#222">Sprea</text>
<rect x="25.5" y="631.5" width="1334" height="42" fill="#fff" stroke="#999"/>
<rect x="27.5" y="633.5" width="1330" height="38" fill="#fff" stroke="#c8c8c8"/>
<rect x="1339" y="635" width="17" height="35" fill="#f0f0f0"/>
<text x="33" y="647" font-size="12.5" textLength="479" lengthAdjust="spacingAndGlyphs">------ Checking SPICE netlist for Figure 22.3 - Monday, 4 September 2023, 8:54:55 pm ------</text>
<text x="33" y="666" font-size="12.5" textLength="684" lengthAdjust="spacingAndGlyphs">Warning: No ground node was found in your circuit. To ensure accurate simulation, add a ground component and simulate again.</text>
<!-- tabs: raised, dark on the bottom and right -->
<g fill="#f0f0f0">
<rect x="27" y="674" width="44" height="17"/><rect x="73" y="674" width="39" height="17"/><rect x="115" y="674" width="70" height="17"/><rect x="187" y="674" width="76" height="17"/><rect x="265" y="673" width="61" height="22"/>
</g>
<path d="M27.5,691V674.5H71M73.5,691V674.5H112M115.5,691V674.5H185M187.5,691V674.5H263M265.5,695V676" fill="none" stroke="#c8c8c8"/>
<path d="M27,691.5H71.5V674M73,691.5H112.5V674M115,691.5H185.5V674M187,691.5H263.5V674M265,695.5H326.5V673" fill="none" stroke="#666"/>
<text x="30" y="688" font-size="12.5" textLength="35.5" lengthAdjust="spacingAndGlyphs">Results</text>
<text x="77" y="688" font-size="12.5" textLength="22.5" lengthAdjust="spacingAndGlyphs">Nets</text>
<text x="119.5" y="688" font-size="12.5" textLength="60" lengthAdjust="spacingAndGlyphs">Components</text>
<text x="191.5" y="688" font-size="12.5" textLength="67.5" lengthAdjust="spacingAndGlyphs">Copper layers</text>
<text x="270.5" y="690" font-size="12.5" textLength="48" lengthAdjust="spacingAndGlyphs">Simulation</text>
<path d="M0,699.5H1366" stroke="#b0b0b0"/><path d="M0,700.5H1366" stroke="#fff"/>
<!-- status -->
<text x="2" y="716" font-size="12.5" textLength="92.5" lengthAdjust="spacingAndGlyphs">For Help, press F1</text>
<text x="789" y="716" class="m">-</text>
<path d="M935.5,703V719M1118.5,703V719M1301.5,703V719" stroke="#c4c4c4"/>
<text x="1123.5" y="716" font-size="12.5" textLength="62" lengthAdjust="spacingAndGlyphs">Tran: 3.184 s</text>
<g fill="#e0e0e0" stroke="#a8a8a8"><rect x="1306.5" y="706.5" width="7" height="12"/><rect x="1314.5" y="706.5" width="7" height="12"/><rect x="1322.5" y="706.5" width="7" height="12"/><rect x="1330.5" y="706.5" width="7" height="12"/><rect x="1338.5" y="706.5" width="6" height="12"/><rect x="1345.5" y="706.5" width="7" height="12"/><rect x="1353.5" y="706.5" width="6" height="12"/></g>

<!-- taskbar -->
<rect y="720" width="1366" height="48" fill="url(#tb)"/>
<g fill="#3fb4ee"><rect x="509" y="733" width="11" height="11" fill="#63c8f4"/><rect x="521" y="733" width="11" height="11" fill="#63c8f4"/><rect x="509" y="745" width="11" height="11"/><rect x="521" y="745" width="11" height="11"/></g>
<rect x="546" y="728" width="100" height="32" rx="16" fill="#1f2f52"/>
<circle cx="575" cy="743" r="4.6" fill="none" stroke="#f0f0f0" stroke-width="1.4"/><path d="M578.5,746.5L582,751" stroke="#f0f0f0" stroke-width="1.6"/>
<text x="588" y="749" textLength="36" lengthAdjust="spacingAndGlyphs" style="fill:#ececec">Search</text>
<rect x="659" y="739" width="18" height="16" fill="#6a6a6a"/><rect x="665" y="733" width="18" height="16" fill="#f2f2f2"/><rect x="665" y="739" width="12" height="10" fill="#b5b5b5"/>
<path d="M703,734H713L716,737H727V756H703Z" fill="#f6c034"/><rect x="703" y="738" width="24" height="18" fill="#fbd654"/><rect x="708" y="746" width="14" height="10" fill="#2d7fd0"/>
<circle cx="715" cy="761.5" r="1.8" fill="#9aa3b0"/>
<path d="M747,738H770V753a3,3 0 0 1 -3,3H750a3,3 0 0 1 -3,-3Z" fill="#f2f2f2"/><path d="M753,738V735a2,2 0 0 1 2,-2h7a2,2 0 0 1 2,2V738" fill="none" stroke="#2a8fe0" stroke-width="2"/>
<rect x="753.5" y="742" width="4.5" height="4.5" fill="#f25022"/><rect x="759" y="742" width="4.5" height="4.5" fill="#7fba00"/><rect x="753.5" y="747.5" width="4.5" height="4.5" fill="#00a4ef"/><rect x="759" y="747.5" width="4.5" height="4.5" fill="#ffb900"/>
<g><circle cx="803" cy="744" r="12" fill="#1ea050"/><path d="M803,732A12,12 0 0 1 813.4,738H803L794,741A12,12 0 0 1 803,732ZM793,736L799,746L793.4,751A12,12 0 0 1 793,736Z" fill="#e03a2e"/><path d="M813.4,738A12,12 0 0 1 803,756L808,747L803,738Z" fill="#fbc02d"/><circle cx="803" cy="744" r="6" fill="#fff"/><circle cx="803" cy="744" r="4.6" fill="#3a82e8"/></g>
<circle cx="803" cy="761.5" r="1.8" fill="#9aa3b0"/>
<rect x="827.5" y="724.5" width="39" height="39" rx="3" fill="#2a3a5c"/>
<rect x="836" y="733" width="22" height="22" fill="#51556f"/><path d="M838,738H856M838,741H846M848,744H856M838,748H846M850,751H856" stroke="#c8cade"/><path d="M842,745V754M846,748V754M852,743V754" stroke="#e8d870"/>
<rect x="839" y="760.5" width="16" height="3" rx="1.5" fill="#4cc2ff"/>
<path d="M1103,747L1108,742L1113,747" fill="none" stroke="#fff" stroke-width="1.4"/>
<text x="1146" y="741" class="m" font-size="12" style="fill:#f2f2f2" textLength="23" lengthAdjust="spacingAndGlyphs">ENG</text>
<text x="1146" y="757" class="m" font-size="12" style="fill:#f2f2f2">US</text>
<g fill="none" stroke="#f0f0f0" stroke-width="1.1"><path d="M1176,741Q1183.5,735 1191,741M1178.5,744Q1183.5,739.5 1188.5,744M1181,747Q1183.5,745 1186,747"/></g><circle cx="1183.5" cy="750" r="1.2" fill="#f0f0f0"/>
<path d="M1201,741H1204L1208,737V751L1204,747H1201ZM1211,740Q1214,744 1211,748M1213.5,738Q1217,744 1213.5,750" fill="none" stroke="#f0f0f0" stroke-width="1.1"/>
<path d="M1225,739.5H1238V750H1225ZM1238,743H1240V747H1238M1231,736L1228,743H1233L1230,750" fill="none" stroke="#f0f0f0" stroke-width="1.2"/>
<text x="1319" y="741" font-size="12" text-anchor="end" style="fill:#f2f2f2" textLength="44" lengthAdjust="spacingAndGlyphs">8:56 pm</text>
<text x="1319" y="757" font-size="12" text-anchor="end" style="fill:#f2f2f2" textLength="62.5" lengthAdjust="spacingAndGlyphs">04/09/2023</text>
<circle cx="1338" cy="745" r="8" fill="#4cc2ff"/><text x="1338" y="749" class="m" font-size="10" style="fill:#0c2a4a">1</text>

<!-- oscilloscope window -->
<rect x="39.5" y="198.5" width="550" height="442" rx="8" fill="#f1f1f1" stroke="#c8c8c8" style="filter:drop-shadow(0 3px 7px rgba(0,0,0,.4))"/>
<text x="49" y="218" font-size="12.5" textLength="98" lengthAdjust="spacingAndGlyphs" style="fill:#8a8a8a">Oscilloscope-XSC1</text>
<path d="M570.5,208.5L580,218M580,208.5L570.5,218" stroke="#8a8a8a"/>
<rect x="40" y="229" width="549" height="2" fill="#666"/>
<rect x="40" y="229" width="2.5" height="249" fill="#555"/>
<rect x="42.5" y="231" width="545" height="246" fill="#000"/>
<rect x="587.5" y="231" width="1.5" height="247" fill="#555"/>
<rect x="40" y="477" width="549" height="2" fill="#fff"/>
<g stroke="#c4c4c4" stroke-dasharray="4 4" fill="none" shape-rendering="crispEdges">
<path d="M52,278.5H580M52,316.5H580M52,393.5H580M52,431.5H580"/>
<path d="M104.5,240V469M157.5,240V469M209.5,240V469M262.5,240V469M315.5,240V469M368.5,240V469M421.5,240V469M473.5,240V469M526.5,240V469"/>
</g>
<rect x="52" y="240" width="528" height="229" fill="none" stroke="#fff" stroke-width="1.3" shape-rendering="crispEdges"/>
<path d="M315.5,237V240M52,469V473" stroke="#fff"/>
<path d="M48,354.5H583" stroke="#fff" stroke-width="1.3"/>
<path d="M52,356.5H580" stroke="#fff" stroke-width="2" stroke-dasharray="1 9.56"/>
<use href="#hump" x="94.4" y="355"/><use href="#hump" x="183.8" y="355"/><use href="#hump" x="273" y="355"/><use href="#hump" x="359.5" y="355"/><use href="#hump" x="448" y="355"/><use href="#hump" x="536" y="355"/>
<path d="M314.5,354.7H359.5M491,354.7H536" stroke="#f00" stroke-width="1.4"/>
<path d="M116.5,240V469" stroke="#2ee6f0" stroke-width="1"/>
<path d="M204.5,240V469" stroke="#ffff20" stroke-width="1"/>
<path d="M108,232H125L116.5,241Z" fill="#10e8f4"/><path d="M198,234H211L204.5,241Z" fill="#ffff10"/>
<text x="116.5" y="238" class="m" font-size="6.5" font-weight="bold" style="fill:#000">1</text><text x="204.5" y="239.5" class="m" font-size="6" font-weight="bold" style="fill:#000">2</text>
<path d="M116.5,288.5L120,291.5V294.5H113V291.5Z" fill="none" stroke="#2ee6f0"/>
<path d="M204.5,288.5L208,291.5V294.5H201V291.5Z" fill="none" stroke="#ffff20"/>

<!-- lower panel -->
<path d="M57,486.5H74" stroke="#888"/>
<rect x="40.5" y="497.5" width="58.5" height="59" fill="#f1f1f1" stroke="#b0b0b0"/>
<text x="46.5" y="516" textLength="11.5" lengthAdjust="spacingAndGlyphs">T1</text>
<text x="46.5" y="530" textLength="11.5" lengthAdjust="spacingAndGlyphs">T2</text>
<text x="46.5" y="550" textLength="27" lengthAdjust="spacingAndGlyphs">T2-T1</text>
<rect x="66.5" y="506.5" width="13" height="13" rx="3" class="b"/><rect x="83.5" y="506.5" width="13" height="13" rx="3" class="b"/><rect x="66.5" y="523.5" width="13" height="13" rx="3" class="b"/><rect x="83.5" y="523.5" width="13" height="13" rx="3" class="b"/>
<g fill="#000"><path d="M68.5,513L73,508.5V511.5H78V514.5H73V517.5Z"/><path d="M94.5,513L90,508.5V511.5H85V514.5H90V517.5Z"/><path d="M68.5,530L73,525.5V528.5H78V531.5H73V534.5Z"/><path d="M94.5,530L90,525.5V528.5H85V531.5H90V534.5Z"/></g>
<rect x="101.5" y="497.5" width="322" height="59" fill="#fff"/>
<path d="M101.5,556.5V497.5H423.5" fill="none" stroke="#6c6c6c" stroke-width="1.2"/>
<g font-size="11">
<text x="125" y="510" textLength="22.5" lengthAdjust="spacingAndGlyphs">Time</text>
<text x="190.5" y="510" textLength="52" lengthAdjust="spacingAndGlyphs">Channel_A</text>
<text x="270.5" y="510" textLength="51" lengthAdjust="spacingAndGlyphs">Channel_B</text>
<text x="112" y="523" textLength="48.5" lengthAdjust="spacingAndGlyphs">12.286 ms</text>
<text x="112" y="536" textLength="48.5" lengthAdjust="spacingAndGlyphs">28.912 ms</text>
<text x="112" y="549" textLength="48.5" lengthAdjust="spacingAndGlyphs">16.626 ms</text>
<text x="194.5" y="523" textLength="42" lengthAdjust="spacingAndGlyphs">16.452 V</text>
<text x="194.5" y="536" textLength="42" lengthAdjust="spacingAndGlyphs">16.428 V</text>
<text x="188" y="549" textLength="54" lengthAdjust="spacingAndGlyphs">-23.664 mV</text>
</g>
<rect x="432.5" y="504.5" width="60" height="20" rx="3" class="b"/><text x="441" y="519" font-size="11.5" textLength="39" lengthAdjust="spacingAndGlyphs">Reverse</text>
<rect x="432.5" y="532.5" width="60" height="21" rx="3" class="b"/><text x="449" y="547" font-size="11.5" textLength="23.5" lengthAdjust="spacingAndGlyphs">Save</text>
<text x="501" y="556" font-size="11.5" textLength="54.5" lengthAdjust="spacingAndGlyphs">Ext. trigger</text>
<circle cx="567" cy="553" r="6" fill="#f1f1f1" stroke="#bcbcbc"/>
<!-- group frames -->
<g fill="none" stroke="#dcdcdc">
<rect x="41.5" y="569.5" width="130" height="70"/><rect x="172.5" y="569.5" width="129" height="70"/><rect x="301.5" y="569.5" width="129" height="70"/><rect x="432.5" y="569.5" width="155" height="70"/>
</g>
<g fill="#f1f1f1"><rect x="47" y="565" width="50" height="8"/><rect x="179" y="565" width="52" height="8"/><rect x="308" y="565" width="51" height="8"/><rect x="438" y="565" width="37" height="8"/></g>
<g font-size="11.5">
<text x="49" y="574" textLength="44.5" lengthAdjust="spacingAndGlyphs">Timebase</text>
<text x="181" y="574" textLength="48" lengthAdjust="spacingAndGlyphs">Channel A</text>
<text x="310" y="574" textLength="47" lengthAdjust="spacingAndGlyphs">Channel B</text>
<text x="440" y="574" textLength="33" lengthAdjust="spacingAndGlyphs">Trigger</text>
<text x="42.5" y="592" textLength="28.5" lengthAdjust="spacingAndGlyphs">Scale:</text>
<text x="42.5" y="612" textLength="56.5" lengthAdjust="spacingAndGlyphs">X pos.(Div):</text>
<text x="174.5" y="592" textLength="28" lengthAdjust="spacingAndGlyphs">Scale:</text>
<text x="174.5" y="612" textLength="56.5" lengthAdjust="spacingAndGlyphs">Y pos.(Div):</text>
<text x="303.5" y="592" textLength="29" lengthAdjust="spacingAndGlyphs">Scale:</text>
<text x="303.5" y="612" textLength="56.5" lengthAdjust="spacingAndGlyphs">Y pos.(Div):</text>
<text x="435.5" y="593" textLength="28" lengthAdjust="spacingAndGlyphs">Edge:</text>
<text x="435.5" y="612" textLength="29.5" lengthAdjust="spacingAndGlyphs">Level:</text>
</g>
<!-- inputs -->
<g class="i" shape-rendering="crispEdges">
<rect x="80.5" y="577.5" width="84" height="18" class="i"/><rect x="105.5" y="597.5" width="59" height="18" class="i"/>
<rect x="212.5" y="577.5" width="84" height="18" class="i"/><rect x="236.5" y="597.5" width="60" height="18" class="i"/>
<rect x="342.5" y="577.5" width="84" height="18" class="i"/><rect x="368.5" y="597.5" width="59" height="18" class="i"/>
<rect x="480.5" y="602.5" width="72" height="17" class="i"/><rect x="555.5" y="602.5" width="25" height="17" class="i"/>
</g>
<path d="M81,595.5H164M106,615.5H164M213,595.5H296M237,615.5H296M343,595.5H426M369,615.5H427M481,619.5H552M556,619.5H580" stroke="#9a9a9a"/>
<g font-size="11.5">
<text x="85.5" y="590" textLength="45.5" lengthAdjust="spacingAndGlyphs">10 ms/Div</text>
<text x="110" y="611">0</text>
<text x="218" y="590" textLength="41" lengthAdjust="spacingAndGlyphs">10  V/Div</text>
<text x="241" y="611">0</text>
<text x="347" y="590" textLength="36.5" lengthAdjust="spacingAndGlyphs">5  V/Div</text>
<text x="373" y="611">0</text>
<text x="485" y="615">0</text>
<text x="562" y="614">V</text>
</g>
<!-- buttons -->
<g font-size="11.5">
<rect x="48.5" y="622.5" width="24" height="16" rx="3" class="s"/><text x="60.5" y="634.5" class="m">Y/T</text>
<rect x="74.5" y="622.5" width="24" height="16" rx="3" class="b"/><text x="86.5" y="634.5" class="m">Add</text>
<rect x="104.5" y="622.5" width="24" height="16" rx="3" class="b"/><text x="116.5" y="634.5" class="m">B/A</text>
<rect x="132.5" y="622.5" width="26" height="16" rx="3" class="b"/><text x="145.5" y="634.5" class="m">A/B</text>
<rect x="176.5" y="622.5" width="21" height="16" rx="3" class="b"/><text x="187" y="634.5" class="m">AC</text>
<rect x="201.5" y="622.5" width="23" height="16" rx="3" class="b"/><text x="213" y="634.5" class="m">0</text>
<rect x="228.5" y="622.5" width="24" height="16" rx="3" class="s"/><text x="240.5" y="634.5" class="m">DC</text>
<circle cx="286" cy="630" r="5" fill="#fff" stroke="#a8a8a8" stroke-width="3"/>
<rect x="306.5" y="623.5" width="23" height="16" rx="3" class="b"/><text x="318" y="635.5" class="m">AC</text>
<rect x="333.5" y="623.5" width="20" height="16" rx="3" class="b"/><text x="343.5" y="635.5" class="m">0</text>
<rect x="356.5" y="623.5" width="24" height="16" rx="3" class="s"/><text x="368.5" y="635.5" class="m">DC</text>
<rect x="384.5" y="623.5" width="15" height="16" rx="3" class="b"/><text x="392" y="635.5" class="m">-</text>
<circle cx="421.5" cy="631" r="6" fill="#f4f4f4" stroke="#c8c8c8"/>
<rect x="480.5" y="581.5" width="16" height="15" rx="3" class="s"/><path d="M484,592.5H488V585.5H492M486,589L488,587L490,589" fill="none" stroke="#111"/>
<rect x="498.5" y="581.5" width="15" height="15" rx="3" class="b"/><path d="M502,585.5H506V592.5H510M504,590L506,592L508,590" fill="none" stroke="#111"/>
<rect x="519.5" y="583.5" width="17" height="15" rx="3" class="s"/><text x="528" y="595" class="m">A</text>
<rect x="539.5" y="583.5" width="15.5" height="15" rx="3" class="d"/><text x="547" y="595" class="m" style="fill:#a8a8a8">B</text>
<rect x="558.5" y="583.5" width="20.5" height="15" rx="3" class="d"/><text x="569" y="595" class="m" style="fill:#a8a8a8">Ext</text>
<rect x="438.5" y="622.5" width="35" height="16" rx="3" class="b"/><text x="456" y="634.5" class="m" textLength="28" lengthAdjust="spacingAndGlyphs">Single</text>
<rect x="477.5" y="622.5" width="39" height="16" rx="3" class="b"/><text x="497" y="634.5" class="m" textLength="33" lengthAdjust="spacingAndGlyphs">Normal</text>
<rect x="519.5" y="622.5" width="28.5" height="16" rx="3" class="b"/><text x="533.5" y="634.5" class="m" textLength="24" lengthAdjust="spacingAndGlyphs">Auto</text>
<rect x="551.5" y="622.5" width="31.5" height="16" rx="3" class="s"/><text x="567" y="634.5" class="m" textLength="26" lengthAdjust="spacingAndGlyphs">None</text>
</g>
<path d="M586,637h1M583.5,639h1M586,639h1" stroke="#999"/>
</svg>
</body></html>
